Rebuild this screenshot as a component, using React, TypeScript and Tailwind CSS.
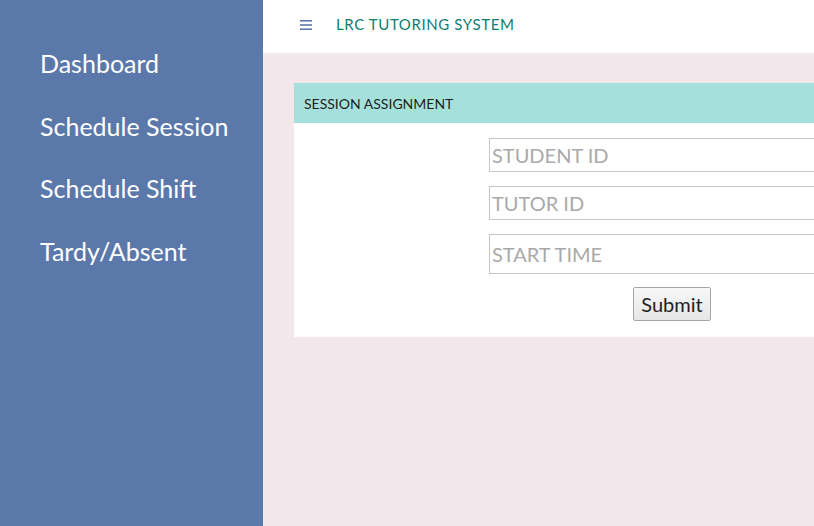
import React from 'react';

const navItems = ['Dashboard', 'Schedule Session', 'Schedule Shift', 'Tardy/Absent'];

const Sidebar: React.FC = () => (
  <aside className="w-[263px] shrink-0 bg-[#5b78ab] pt-[48px] pl-[40px]">
    <ul className="flex flex-col gap-[32.5px]">
      {navItems.map((item) => (
        <li key={item} className="text-[25px] leading-[30px] text-white">
          {item}
        </li>
      ))}
    </ul>
  </aside>
);

const Field: React.FC<{ placeholder: string; tall?: boolean }> = ({ placeholder, tall }) => (
  <input
    type="text"
    placeholder={placeholder}
    className={`block w-[366px] mx-auto border border-[#c6c6c6] bg-white px-[2px] text-[20px] text-[#333] placeholder:text-[#a9a9a9] outline-none ${
      tall ? 'h-[40px]' : 'h-[34px]'
    }`}
  />
);

const App: React.FC = () => {
  return (
    <div
      className="flex h-[526px] w-[814px] overflow-hidden"
      style={{ fontFamily: 'Lato, "Open Sans", sans-serif' }}
    >
      <Sidebar />
      <div className="flex min-w-0 flex-1 flex-col bg-[#f2e8ec]">
        <header className="flex h-[53px] shrink-0 items-center bg-white pl-[37px] pb-[4px]">
          <svg width="12" height="10" viewBox="0 0 12 10" className="mr-[24px] mt-[1px]">
            <rect x="0" y="0" width="12" height="1.6" fill="#5b78ab" />
            <rect x="0" y="4.2" width="12" height="1.6" fill="#5b78ab" />
            <rect x="0" y="8.4" width="12" height="1.6" fill="#5b78ab" />
          </svg>
          <span className="text-[15px] tracking-[0.6px] text-[#0e7d70]">LRC TUTORING SYSTEM</span>
        </header>
        <main className="pl-[31px] pt-[30px]">
          <section className="w-[756px] bg-white">
            <div className="flex h-[40px] items-center bg-[#a5e1dc] pl-[10px] pt-[1px] text-[14px] text-[#1e1e1e]">
              SESSION ASSIGNMENT
            </div>
            <form className="flex flex-col gap-[14px] pt-[15px] pb-[16px]">
              <Field placeholder="STUDENT ID" />
              <Field placeholder="TUTOR ID" />
              <Field placeholder="START TIME" tall />
              <div className="-mt-[1px] text-center">
                <button
                  type="button"
                  className="h-[34px] w-[78px] rounded-[2px] border border-[#a6a6a6] bg-gradient-to-b from-[#f8f8f8] to-[#e6e6e6] text-[20px] text-[#222]"
                >
                  Submit
                </button>
              </div>
            </form>
          </section>
        </main>
      </div>
    </div>
  );
};

export default App;
